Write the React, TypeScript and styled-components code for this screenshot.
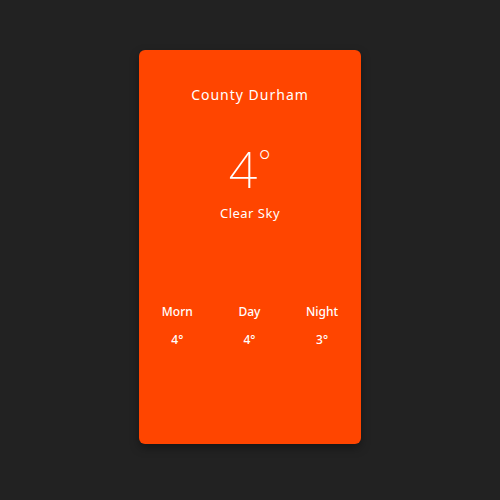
import React from "react";
import styled, { createGlobalStyle } from "styled-components";

const GlobalStyle = createGlobalStyle`
  html, body {
    margin: 0;
    padding: 0;
    background: #222222;
  }
  body {
    font-family: "Noto Sans", "DejaVu Sans", sans-serif;
  }
`;

const Page = styled.div`
  width: 500px;
  height: 500px;
  display: flex;
  justify-content: center;
  align-items: flex-start;
  padding-top: 50px;
  box-sizing: border-box;
`;

const Card = styled.div`
  width: 222px;
  height: 394px;
  background-color: #ff4500;
  border-radius: 6px;
  box-shadow: 0 4px 10px rgba(0, 0, 0, 0.35);
  color: #fff;
  display: flex;
  flex-direction: column;
  align-items: center;
  box-sizing: border-box;
  padding-top: 35px;
`;

const City = styled.h1`
  margin: 0;
  font-size: 14px;
  font-weight: 400;
  letter-spacing: 1px;
  line-height: 20px;
`;

const Temp = styled.div`
  margin-top: 35px;
  display: flex;
  align-items: flex-start;
  font-size: 50px;
  font-weight: 200;
  line-height: 58px;
`;

const Degree = styled.span`
  font-size: 30px;
  margin-top: 1px;
  margin-left: 1px;
  font-weight: 200;
  line-height: 40px;
`;

const Summary = styled.p`
  margin: 6px 0 0;
  font-size: 13px;
  letter-spacing: 0.5px;
  line-height: 18px;
`;

const Forecast = styled.div`
  margin-top: 81px;
  width: 100%;
  display: flex;
  justify-content: space-around;
`;

const Column = styled.div`
  display: flex;
  flex-direction: column;
  align-items: center;
  gap: 10px;
`;

const Label = styled.span`
  font-size: 12px;
  font-weight: 500;
  line-height: 18px;
`;

const Value = styled.span`
  font-size: 12px;
  font-weight: 500;
  line-height: 18px;
`;

const forecast = [
  { label: "Morn", value: "4°" },
  { label: "Day", value: "4°" },
  { label: "Night", value: "3°" },
];

const App: React.FC = () => {
  return (
    <>
      <GlobalStyle />
      <Page>
        <Card>
          <City>County Durham</City>
          <Temp>
            4<Degree>°</Degree>
          </Temp>
          <Summary>Clear Sky</Summary>
          <Forecast>
            {forecast.map((f) => (
              <Column key={f.label}>
                <Label>{f.label}</Label>
                <Value>{f.value}</Value>
              </Column>
            ))}
          </Forecast>
        </Card>
      </Page>
    </>
  );
};

export default App;
